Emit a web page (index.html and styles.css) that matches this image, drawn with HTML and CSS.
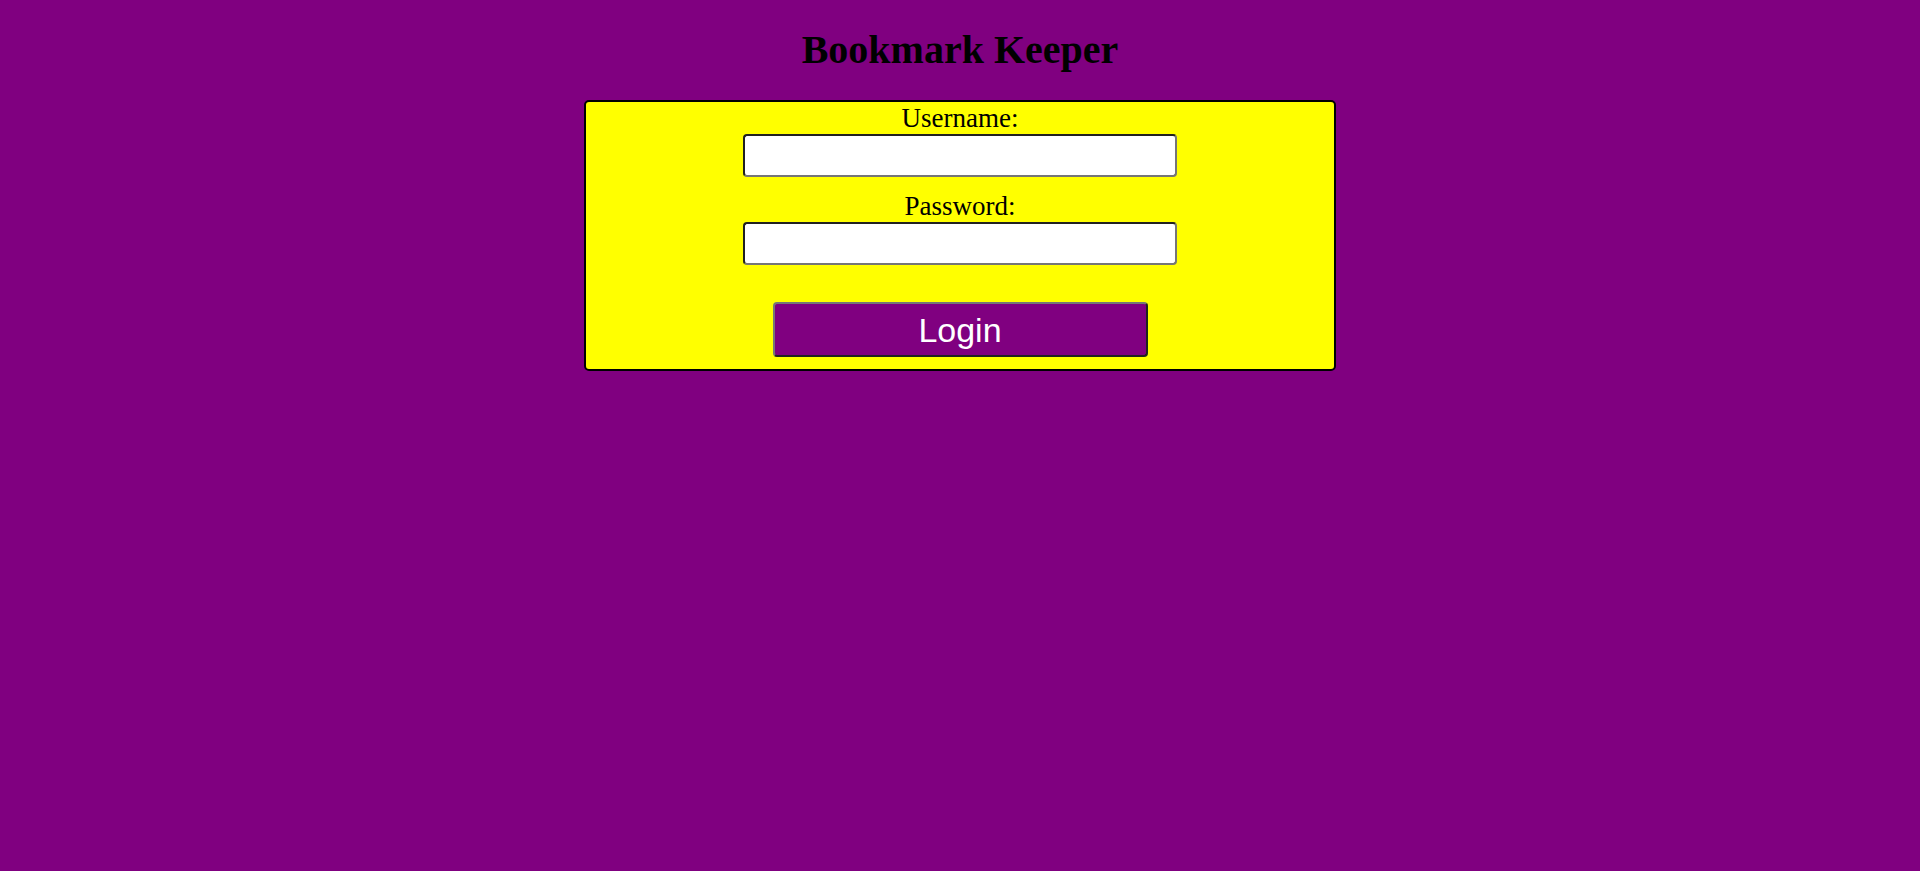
FILE: index.html
```html
<!DOCTYPE html>
<html lang="en">
<head>
<meta charset="utf-8">
<title>Bookmark Keeper</title>
<link rel="stylesheet" href="styles.css">
</head>
<body>
<main class="page">
  <h1 class="title">Bookmark Keeper</h1>
  <form class="login-box">
    <label class="field-label" for="username">Username:</label>
    <input class="field-input" id="username" type="text">
    <label class="field-label field-label-gap" for="password">Password:</label>
    <input class="field-input" id="password" type="password">
    <button class="login-button" type="button">Login</button>
  </form>
</main>
</body>
</html>
```

FILE: styles.css
```css
html, body {
  margin: 0;
  padding: 0;
  background: #800080;
}

.page {
  display: flex;
  flex-direction: column;
  align-items: center;
  padding-top: 27px;
  font-family: "Liberation Serif", "Times New Roman", serif;
  color: #000;
}

.title {
  margin: 0 0 27px;
  font-size: 40px;
  line-height: 46px;
  font-weight: bold;
  text-align: center;
}

.login-box {
  box-sizing: border-box;
  width: 752px;
  display: flex;
  flex-direction: column;
  align-items: center;
  padding: 1px 0 12px;
  background: #ffff00;
  border: 2px solid #000;
  border-radius: 5px;
}

.field-label {
  display: block;
  font-size: 27px;
  line-height: 31px;
  text-align: center;
}

.field-label-gap {
  margin-top: 14px;
}

.field-input {
  box-sizing: border-box;
  width: 434px;
  height: 43px;
  margin: 0;
  padding: 1px 2px;
  background: #fff;
  border: 2px inset rgb(118, 118, 118);
  border-radius: 4px;
  font-size: 20px;
}

.login-button {
  box-sizing: border-box;
  width: 375px;
  height: 55px;
  margin-top: 37px;
  padding: 0;
  background: #800080;
  color: #fff;
  border: 2px outset rgb(118, 118, 118);
  border-radius: 4px;
  font-family: "Liberation Sans", Arial, sans-serif;
  font-size: 34px;
  line-height: 1;
}
```
